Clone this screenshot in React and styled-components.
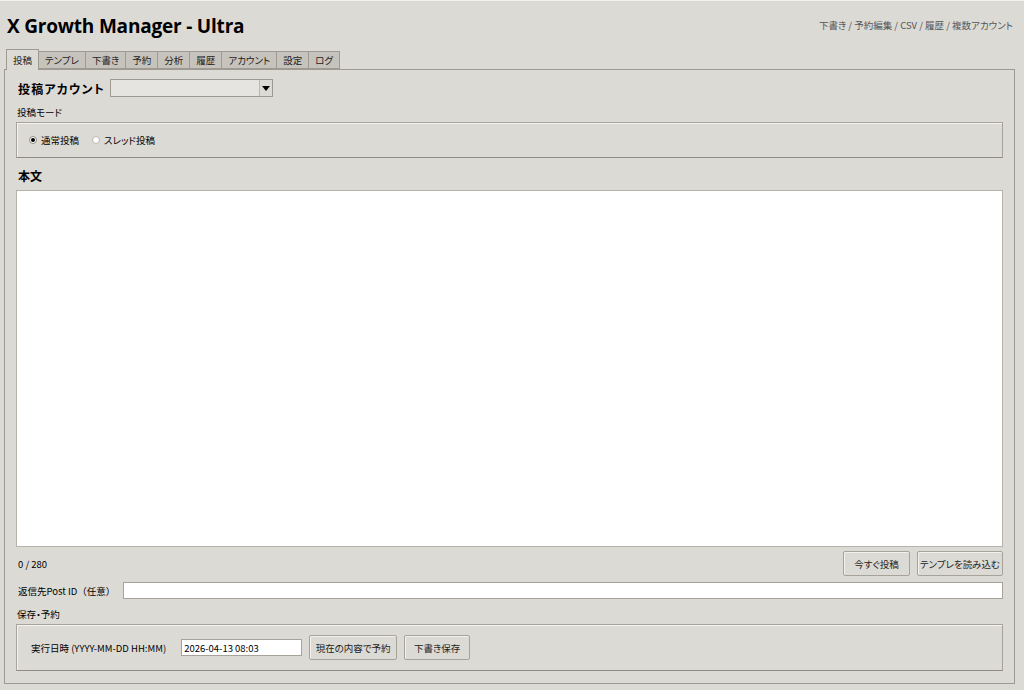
import styled, { createGlobalStyle } from 'styled-components';

const GlobalStyle = createGlobalStyle`
  html, body {
    margin: 0;
    padding: 0;
    background: #dcdad5;
  }
  body {
    font-family: "Noto Sans CJK JP", "Noto Sans", sans-serif;
    font-feature-settings: "palt";
    color: #000;
  }
`;

const Window = styled.div`
  width: 1024px;
  height: 690px;
  box-sizing: border-box;
  border-top: 1px solid #f2f1ee;
  display: flex;
  flex-direction: column;
  overflow: hidden;
`;

const Header = styled.div`
  height: 46px;
  display: flex;
  align-items: flex-start;
  justify-content: space-between;
  padding: 0 11px 0 7px;
`;

const Title = styled.h1`
  margin: 12px 0 0;
  font-family: "Open Sans", "Noto Sans", sans-serif;
  font-weight: 700;
  font-size: 19px;
  line-height: 26px;
  letter-spacing: -0.2px;
`;

const HeaderNote = styled.div`
  margin-top: 17px;
  font-size: 9.5px;
  color: #555;
`;

const TabBar = styled.div`
  display: flex;
  align-items: flex-end;
  margin: 2px 0 0 6px;
  height: 20px;
`;

const Tab = styled.div`
  box-sizing: border-box;
  height: ${(p) => (p.$active ? '21px' : '18px')};
  margin-bottom: ${(p) => (p.$active ? '-1px' : '0')};
  padding: 0 6px;
  display: flex;
  align-items: center;
  font-size: 9.5px;
  color: #222;
  background: ${(p) => (p.$active ? '#dcdad5' : '#c6c3bc')};
  border: 1px solid #9e9a91;
  border-bottom: ${(p) => (p.$active ? 'none' : '1px solid #9e9a91')};
  border-left-width: ${(p) => (p.$first ? '1px' : '0')};
  position: relative;
  z-index: ${(p) => (p.$active ? 2 : 1)};
  white-space: nowrap;
`;

const Panel = styled.div`
  box-sizing: border-box;
  margin: 0 9px 0 4px;
  height: 615px;
  border: 1px solid #9e9a91;
  padding: 9px 11px 0 11px;
  display: flex;
  flex-direction: column;
`;

const AccountRow = styled.div`
  display: flex;
  align-items: center;
  gap: 10px;
  margin-left: 2px;
  height: 18px;
`;

const AccountLabel = styled.div`
  font-size: 12px;
  font-weight: 700;
  letter-spacing: 1.2px;
  white-space: nowrap;
  width: 82px;
`;

const Combo = styled.div`
  box-sizing: border-box;
  width: 163px;
  height: 18px;
  border: 1px solid #9e9a91;
  background: #e6e4e0;
  display: flex;
  justify-content: flex-end;
`;

const ComboArrow = styled.div`
  width: 12px;
  border-left: 1px solid #bcb8b0;
  background: #dcdad5;
  display: flex;
  align-items: center;
  justify-content: center;
  &::after {
    content: '';
    border-left: 4px solid transparent;
    border-right: 4px solid transparent;
    border-top: 5px solid #000;
  }
`;

const SmallLabel = styled.div`
  font-size: 9.5px;
  line-height: 12px;
  margin: ${(p) => p.$margin || '0'};
  padding-left: 1px;
`;

const GroupBox = styled.div`
  box-sizing: border-box;
  height: ${(p) => p.$height};
  flex: none;
  border: 1px solid #a7a39b;
  border-bottom-color: #8f8b84;
  box-shadow: inset 1px 1px 0 #f4f3f0;
  display: flex;
  align-items: center;
  padding: 0 12px;
  gap: ${(p) => p.$gap || '10px'};
`;

const Radio = styled.label`
  display: flex;
  align-items: center;
  gap: 4px;
  font-size: 9.5px;
`;

const RadioDot = styled.span`
  box-sizing: border-box;
  width: 8px;
  height: 8px;
  border-radius: 50%;
  background: #fff;
  border: 1px solid ${(p) => (p.$checked ? '#8f8b84' : '#bdb9b1')};
  display: flex;
  align-items: center;
  justify-content: center;
  &::after {
    content: '';
    display: ${(p) => (p.$checked ? 'block' : 'none')};
    width: 4px;
    height: 4px;
    border-radius: 50%;
    background: #000;
  }
`;

const SectionTitle = styled.div`
  font-size: 12px;
  font-weight: 700;
  line-height: 16px;
  margin: 10px 0 0 2px;
`;

const TextArea = styled.div`
  box-sizing: border-box;
  height: 357px;
  flex: none;
  margin-top: 6px;
  background: #fff;
  border: 1px solid #b7b3ab;
`;

const CounterRow = styled.div`
  display: flex;
  align-items: center;
  margin-top: 4px;
  height: 25px;
  gap: 7px;
`;

const Counter = styled.div`
  font-size: 9.5px;
  flex: 1;
  padding-left: 2px;
  margin-top: 1px;
`;

const Button = styled.button`
  box-sizing: border-box;
  height: ${(p) => p.$h || '25px'};
  width: ${(p) => p.$w};
  padding: 0;
  font-family: inherit;
  font-feature-settings: "palt";
  font-size: 9.5px;
  white-space: nowrap;
  color: #222;
  background: #dcdad5;
  border: 1px solid #a7a39b;
  border-radius: 2px;
  box-shadow: inset 1px 1px 0 #f2f1ee;
`;

const FieldRow = styled.div`
  display: flex;
  align-items: center;
  gap: 8px;
  margin-top: 6px;
`;

const FieldLabel = styled.div`
  font-size: 9.5px;
  font-feature-settings: normal;
  padding-left: 2px;
  margin-right: ${(p) => p.$trail || '0'};
  white-space: nowrap;
`;

const Entry = styled.div`
  box-sizing: border-box;
  height: 17px;
  width: ${(p) => p.$w || 'auto'};
  flex: ${(p) => (p.$w ? 'none' : 1)};
  background: #fff;
  border: 1px solid #a7a39b;
  font-size: 9.5px;
  display: flex;
  align-items: center;
  padding-left: 2px;
`;

const tabs = ['投稿', 'テンプレ', '下書き', '予約', '分析', '履歴', 'アカウント', '設定', 'ログ'];

export default function App() {
  return (
    <>
      <GlobalStyle />
      <Window>
        <Header>
          <Title>X Growth Manager - Ultra</Title>
          <HeaderNote>下書き / 予約編集 / CSV / 履歴 / 複数アカウント</HeaderNote>
        </Header>
        <TabBar>
          {tabs.map((t, i) => (
            <Tab key={t} $active={i === 0} $first={i === 0}>{t}</Tab>
          ))}
        </TabBar>
        <Panel>
          <AccountRow>
            <AccountLabel>投稿アカウント</AccountLabel>
            <Combo><ComboArrow /></Combo>
          </AccountRow>
          <SmallLabel $margin="9px 0 4px">投稿モード</SmallLabel>
          <GroupBox $height="36px" $gap="13px">
            <Radio><RadioDot $checked />通常投稿</Radio>
            <Radio><RadioDot />スレッド投稿</Radio>
          </GroupBox>
          <SectionTitle>本文</SectionTitle>
          <TextArea />
          <CounterRow>
            <Counter>0 / 280</Counter>
            <Button $w="67px">今すぐ投稿</Button>
            <Button $w="86px">テンプレを読み込む</Button>
          </CounterRow>
          <FieldRow>
            <FieldLabel>返信先Post ID（任意）</FieldLabel>
            <Entry />
          </FieldRow>
          <SmallLabel $margin="9px 0 4px">保存・予約</SmallLabel>
          <GroupBox $height="47px" $gap="7px">
            <FieldLabel $trail="8px">実行日時 (YYYY-MM-DD HH:MM)</FieldLabel>
            <Entry $w="121px">2026-04-13 08:03</Entry>
            <Button $w="88px">現在の内容で予約</Button>
            <Button $w="66px">下書き保存</Button>
          </GroupBox>
        </Panel>
      </Window>
    </>
  );
}
